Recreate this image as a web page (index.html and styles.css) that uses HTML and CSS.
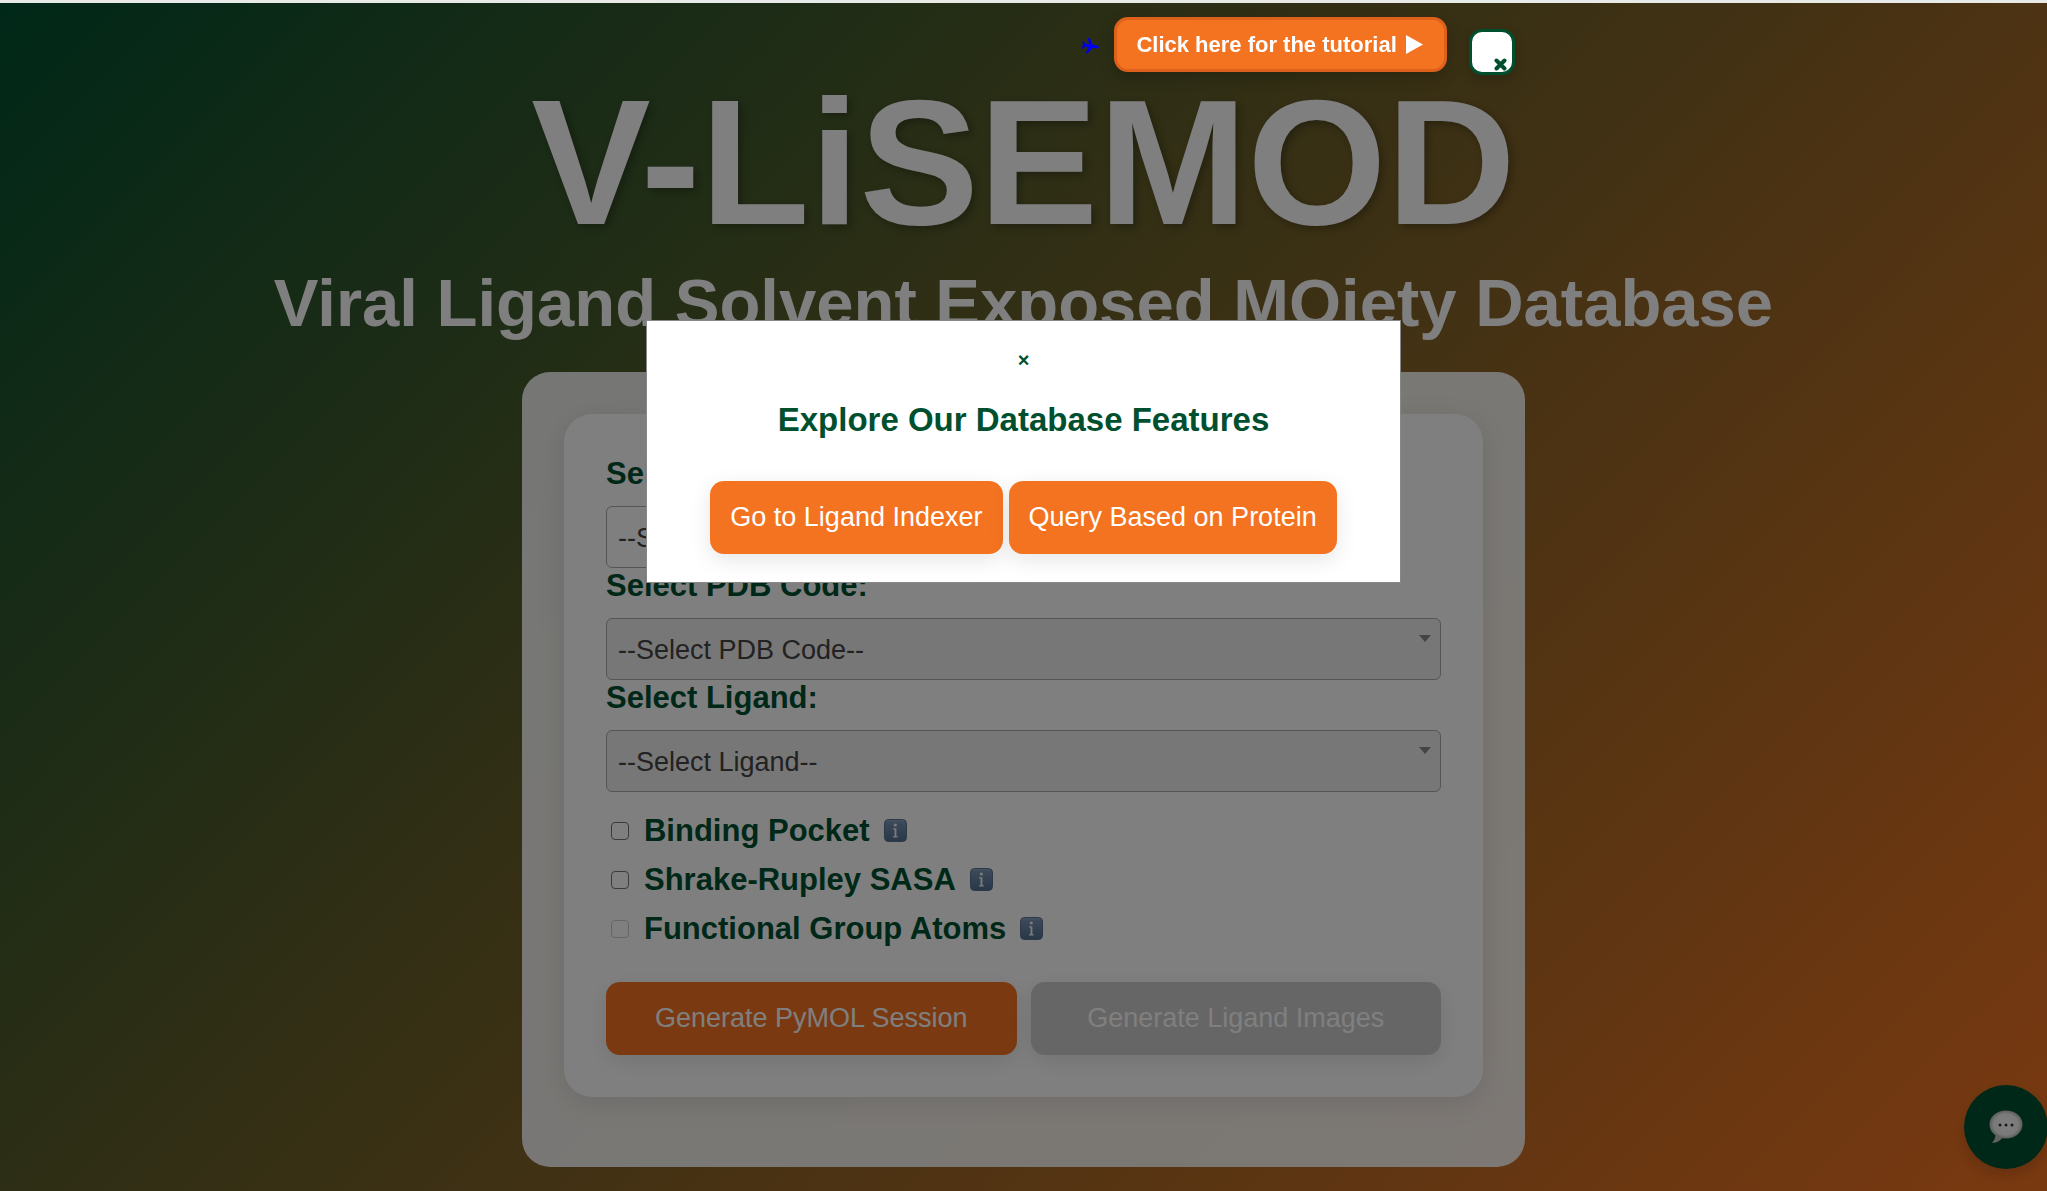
FILE: index.html
```html
<!DOCTYPE html>
<html lang="en">
<head>
<meta charset="utf-8">
<meta name="viewport" content="width=device-width, initial-scale=1">
<title>V-LiSEMOD</title>
<link rel="stylesheet" href="styles.css">
</head>
<body>
<svg class="symbols" aria-hidden="true">
  <defs>
    <linearGradient id="info-face" x1="0" y1="0" x2="0" y2="1">
      <stop offset="0" stop-color="#8fa9c9"/>
      <stop offset="0.15" stop-color="#7590b2"/>
      <stop offset="1" stop-color="#52708f"/>
    </linearGradient>
    <radialGradient id="bubble-face" cx="0.5" cy="0.5" r="0.5">
      <stop offset="0" stop-color="#fff"/>
      <stop offset="0.75" stop-color="#f4f4f4"/>
      <stop offset="1" stop-color="#b8b8b8"/>
    </radialGradient>
    <symbol id="info" viewBox="0 0 23 23">
      <rect x="0.5" y="0.5" width="22" height="22" rx="4" fill="url(#info-face)" stroke="#58728f"/>
      <circle cx="11.3" cy="6" r="1.6" fill="#f4f6f8"/>
      <path d="M9 9.2h3.400v8h1.400v1.200H9v-1.200h1.500v-6.800H9z" fill="#f4f6f8"/>
    </symbol>
  </defs>
</svg>
<nav class="topbar">
  <a class="plane" href="#jump" aria-label="Jump">
    <svg viewBox="0 0 18 18" width="18" height="18"><path transform="rotate(8 9 9)" d="M18 9c0-.9-1.400-1.500-3-1.500h-3.200L7.500 1.200H5.600l2.200 6.300H4L2.400 5.300H1l.9 3.700-.9 3.700h1.400L4 10.500h3.800l-2.200 6.300h1.900l4.300-6.300H15c1.600 0 3-.6 3-1.500z" fill="#00e"/></svg>
  </a>
  <button class="tutorial" type="button">Click here for the tutorial
    <svg viewBox="0 0 17 19" width="17" height="19" aria-hidden="true"><path d="M0 0l17 9.500L0 19z" fill="#fff"/></svg>
  </button>
  <button class="dismiss" type="button" aria-label="Dismiss">
    <svg viewBox="0 0 13 13" width="13" height="13"><path d="M2.500 2.500l8 8M10.500 2.500l-8 8" stroke="#005030" stroke-width="4" stroke-linecap="round"/></svg>
  </button>
</nav>
<header class="heading">
  <h1>V-LiSEMOD</h1>
  <p>Viral Ligand Solvent Exposed MOiety Database</p>
</header>
<main class="panel">
  <form class="card">
    <label class="field-label" for="virus">Select Virus:</label>
    <div class="picker picker-short"><select id="virus"><option>--Select Virus--</option></select></div>
    <label class="field-label" for="pdb">Select PDB Code:</label>
    <div class="picker"><select id="pdb" disabled><option>--Select PDB Code--</option></select></div>
    <label class="field-label" for="ligand">Select Ligand:</label>
    <div class="picker"><select id="ligand" disabled><option>--Select Ligand--</option></select></div>
    <div class="options">
      <div class="option"><input type="checkbox" id="pocket"><label for="pocket">Binding Pocket</label><svg class="info"><use href="#info"/></svg></div>
      <div class="option"><input type="checkbox" id="sasa"><label for="sasa">Shrake-Rupley SASA</label><svg class="info"><use href="#info"/></svg></div>
      <div class="option"><input type="checkbox" id="atoms" disabled><label for="atoms">Functional Group Atoms</label><svg class="info"><use href="#info"/></svg></div>
    </div>
    <div class="actions">
      <button class="btn" type="button">Generate PyMOL Session</button>
      <button class="btn" type="button" disabled>Generate Ligand Images</button>
    </div>
  </form>
</main>
<button class="chat" type="button" aria-label="Chat">
  <svg viewBox="0 0 34 34" width="34" height="34"><path d="M6.500 22C7 27 5.500 30 3 33c5 0 9-3 11-6z" fill="#c4c4c4"/><ellipse cx="17" cy="14.500" rx="16.500" ry="14" fill="url(#bubble-face)"/><g fill="#333"><circle cx="11" cy="15" r="1.500"/><circle cx="17" cy="15" r="1.500"/><circle cx="23" cy="15" r="1.500"/></g></svg>
</button>
<div class="overlay">
  <section class="modal" role="dialog" aria-labelledby="modal-title">
    <button class="modal-close" type="button" aria-label="Close">×</button>
    <h2 id="modal-title">Explore Our Database Features</h2>
    <div class="modal-actions">
      <button class="btn" type="button">Go to Ligand Indexer</button>
      <button class="btn" type="button">Query Based on Protein</button>
    </div>
  </section>
</div>
</body>
</html>
```
FILE: styles.css
```css
* { box-sizing: border-box; }

html { background: #fff; }

body {
  margin: 0;
  min-height: 100vh;
  border-top: 3px solid #e8eae8;
  background: linear-gradient(135deg, #005030, #f47321) border-box;
  font-family: "Liberation Sans", Arial, sans-serif;
  color: #005030;
}

button, select { font-family: inherit; }

.symbols { position: absolute; width: 0; height: 0; }

.topbar {
  position: relative;
  z-index: 20;
  display: flex;
  justify-content: flex-end;
  align-items: flex-start;
  height: 70px;
  padding: 14px 26% 0 0;
}

.plane { display: flex; margin: 20px 15px 0 0; }

.tutorial {
  display: flex;
  align-items: center;
  gap: 9px;
  height: 55px;
  padding: 0 21px 0 19px;
  border: 3px solid #dd611a;
  border-radius: 14px;
  background: #f47321;
  box-shadow: 0 6px 16px rgba(0, 0, 0, 0.2);
  color: #fff;
  font-size: 22px;
  font-weight: bold;
}

.dismiss {
  display: flex;
  align-items: flex-end;
  justify-content: flex-end;
  width: 46px;
  height: 46px;
  margin: 12px 0 0 22px;
  padding: 0 5px 1px 0;
  border: 3px solid #005030;
  border-radius: 13px;
  background: #fff;
  box-shadow: 0 4px 12px rgba(0, 0, 0, 0.2);
}

.heading { color: #fff; text-align: center; }

.heading h1 {
  margin: 0;
  font-size: 179px;
  line-height: 178px;
  text-shadow: 3px 3px 8px rgba(0, 0, 0, 0.3);
}

.heading p {
  margin: 12px 0 0;
  font-size: 67px;
  font-weight: bold;
  line-height: 80px;
}

.panel {
  width: 49%;
  margin: 29px auto 0;
  padding: 42px 42px 70px;
  border-radius: 28px;
  background: rgba(255, 255, 255, 0.9);
}

.card {
  padding: 42px;
  border-radius: 28px;
  background: #fff;
  box-shadow: 0 6px 28px rgba(0, 0, 0, 0.1);
}

.field-label {
  display: block;
  height: 50px;
  font-size: 31px;
  font-weight: bold;
  line-height: 36px;
}

.picker { position: relative; }

.picker-short { width: 50%; }

.picker::after {
  content: "";
  position: absolute;
  top: 17px;
  right: 10px;
  border: solid transparent;
  border-width: 7px 6px 0;
  border-top-color: #888;
}

.picker select {
  display: block;
  width: 100%;
  height: 62px;
  padding: 1px 11px 0;
  border: 1px solid #aaa;
  border-radius: 6px;
  background: #fff;
  color: #444;
  font-size: 27px;
  appearance: none;
  opacity: 1;
}

.picker select:disabled { background: #eee; }

.options { margin-top: 14px; }

.option {
  display: flex;
  align-items: center;
  height: 49px;
  font-size: 31px;
  font-weight: bold;
}

.option input {
  width: 18px;
  height: 18px;
  margin: 0 15px 0 5px;
  border: 1px solid #767676;
  border-radius: 4px;
  background: #fff;
  appearance: none;
}

.option input:disabled { border-color: #ccc; }

.info { width: 23px; height: 23px; margin-left: 14px; }

.actions { display: flex; gap: 14px; margin-top: 29px; }

.actions .btn { flex: 1; }

.btn {
  height: 73px;
  padding: 0 20px;
  border: 0;
  border-radius: 14px;
  background: #f47321;
  box-shadow: 0 6px 21px rgba(0, 0, 0, 0.1);
  color: #fff;
  font-size: 27px;
}

.btn:disabled { background: #ccc; }

.chat {
  position: fixed;
  right: -1px;
  bottom: 22px;
  display: flex;
  align-items: center;
  justify-content: center;
  width: 84px;
  height: 84px;
  padding: 0;
  border: 0;
  border-radius: 50%;
  background: #005030;
  box-shadow: 0 6px 14px rgba(0, 0, 0, 0.15);
}

.overlay {
  position: fixed;
  inset: 3px 0 0;
  z-index: 10;
  display: flex;
  align-items: flex-start;
  justify-content: center;
  padding-top: 317px;
  background: rgba(0, 0, 0, 0.5);
}

.modal {
  padding: 28px 63px;
  border: 1px solid #888;
  background: #fff;
  text-align: center;
}

.modal-close {
  padding: 0;
  border: 0;
  background: none;
  color: #005030;
  font-size: 20px;
  font-weight: bold;
  line-height: 22px;
}

.modal h2 {
  margin: 29px 0 41px;
  font-size: 33px;
  line-height: 40px;
}

.modal-actions { display: flex; gap: 6px; }
```
